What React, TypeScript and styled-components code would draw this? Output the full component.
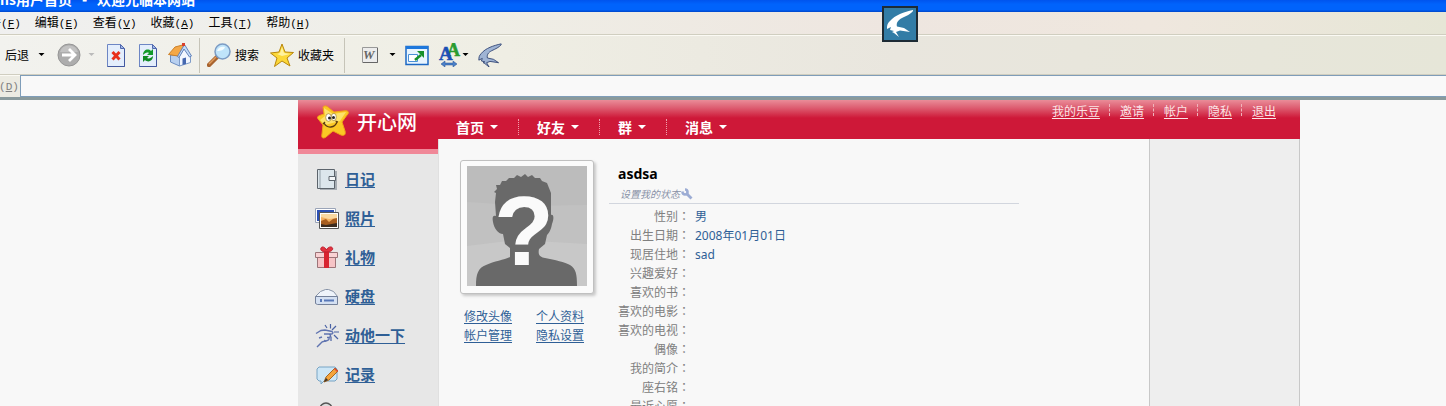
import React from "react";
import styled, { createGlobalStyle } from "styled-components";

const GlobalStyle = createGlobalStyle`
  * { box-sizing: border-box; }
  body {
    margin: 0;
    background: #f8f8f8;
    font-family: "Noto Sans", "Noto Sans CJK SC", sans-serif;
    font-size: 12px;
    line-height: 19px;
    color: #808080;
  }
  svg { display: block; flex: none; }
`;

/* ---------- Browser chrome ---------- */

const Screen = styled.div`
  height: 100vh;
  overflow: hidden;
  display: flex;
  flex-direction: column;
`;

const TitleBar = styled.div`
  flex: none;
  display: flex;
  align-items: flex-end;
  height: 12px;
  gap: 10px;
  overflow: hidden;
  padding-bottom: 6px;
  background: linear-gradient(#0054ee, #0063fc 35%, #0063fc 80%, #0046c8);
  color: #fff;
  font-family: "Noto Sans CJK SC", sans-serif;
  font-weight: 700;
  font-size: 14px;
  line-height: 14px;
  white-space: nowrap;
`;

const chromeTint = "linear-gradient(90deg, #f0f0f0, #efeee6 35%, #eee6e0 62%, #efe7de 80%, #e6e6d6)";

const MenuBar = styled.nav`
  flex: none;
  display: flex;
  align-items: center;
  gap: 14px;
  height: 23px;
  margin-left: -23px;
  border-bottom: 1px solid #d0cec0;
  background: ${chromeTint};
`;

const ChromeButton = styled.button<{ $labelled?: boolean }>`
  display: flex;
  align-items: center;
  gap: 4px;
  flex: none;
  margin: 0;
  padding: 0 ${(p) => (p.$labelled ? 3 : 0)}px 0 0;
  border: 0;
  background: none;
  color: #000;
  font-family: "Noto Sans CJK SC", sans-serif;
  font-size: 12px;
  line-height: 16px;
  white-space: nowrap;
`;

const Key = styled.span`
  font-family: "Liberation Mono", monospace;
  font-size: 11px;
`;

const ToolBar = styled.div`
  flex: none;
  display: flex;
  align-items: center;
  gap: 8px;
  height: 40px;
  padding-left: 5px;
  border-top: 1px solid #fbfaf4;
  border-bottom: 1px solid #d0cec0;
  background: linear-gradient(90deg, #f2f2ee, #efeee4 35%, #e9e6de 62%, #e6e6d8);
`;

const Split = styled.div<{ $gap: number; $lead?: number }>`
  display: flex;
  align-items: center;
  gap: ${(p) => p.$gap}px;
  padding-left: ${(p) => p.$lead ?? 0}px;
`;

const Divider = styled.span`
  width: 1px;
  height: 35px;
  margin: 0 -1px;
  background: #c6c4b8;
`;

const AddressBar = styled.div`
  flex: none;
  display: flex;
  align-items: center;
  height: 25px;
  margin-left: -25px;
  border-bottom: 3px solid #8a9a9c;
  background: #ecebe2;
  box-shadow: inset 0 1px #fbfaf4;
`;

const AddressLabel = styled.label`
  width: 45px;
  flex: none;
  font-family: "Noto Sans CJK SC", sans-serif;
  color: #808080;
`;

const AddressInput = styled.input`
  flex: 1;
  min-width: 0;
  height: 22px;
  padding: 0 4px;
  border: 1px solid #7f9db9;
  border-right: 0;
  background: #f9f9f9;
  font-family: inherit;
  font-size: 12px;
`;

const FloatingBird = styled.div`
  position: absolute;
  top: 6px;
  left: 882px;
  border: 2px solid #1d2b35;
  background: #327ca6;
`;

/* ---------- Site ---------- */

const Page = styled.div`
  flex: 1;
  min-height: 0;
  display: flex;
  padding: 0 146px 0 298px;
  overflow: hidden;
`;

const redBar = "linear-gradient(#ea8c98, #dd5c70 8px, #ce1838 18px)";

const Sidebar = styled.aside`
  flex: none;
  width: 140px;
  background: #e7e7e7;
`;

const Brand = styled.a`
  display: flex;
  align-items: center;
  gap: 6px;
  height: 54px;
  padding: 0 0 5px 19px;
  border-bottom: 5px solid #f08898;
  background: ${redBar};
  color: #fff;
  font-family: "Noto Sans CJK SC", sans-serif;
  font-size: 20px;
  font-weight: 500;
  line-height: 24px;
  text-decoration: none;
`;

const AppList = styled.ul`
  list-style: none;
  margin: 0;
  padding: 6px 0 0 17px;
`;

const AppItem = styled.li`
  display: flex;
  align-items: center;
  gap: 6px;
  height: 39px;
`;

const TextLink = styled.a<{ $large?: boolean }>`
  color: #2f5f96;
  font-family: "Noto Sans CJK SC", sans-serif;
  font-size: ${(p) => (p.$large ? 15 : 12)}px;
  font-weight: ${(p) => (p.$large ? 700 : 400)};
  padding-bottom: ${(p) => (p.$large ? 2 : 0)}px;
  text-decoration: underline;
  text-underline-offset: 2px;
  text-decoration-thickness: 1px;
`;

const Main = styled.div`
  flex: 1;
  min-width: 0;
  display: flex;
  flex-direction: column;
`;

const Header = styled.header`
  flex: none;
  display: flex;
  justify-content: space-between;
  align-items: flex-start;
  height: 39px;
  padding-right: 24px;
  background: ${redBar};
`;

const NavList = styled.ul`
  display: flex;
  list-style: none;
  margin: 0;
  padding: 19px 0 0;
`;

const NavItem = styled.li`
  display: flex;
  align-items: center;
  height: 16px;
  padding: 0 20px 0 18px;
  &:not(:last-child) { border-right: 1px dotted #f0a0ac; }
`;

const NavLink = styled.a`
  display: flex;
  align-items: center;
  gap: 6px;
  color: #fff;
  font-family: "Noto Sans CJK SC", sans-serif;
  font-size: 14px;
  font-weight: 700;
  line-height: 16px;
  text-decoration: none;
`;

const UserLinks = styled.ul`
  display: flex;
  list-style: none;
  margin: 0;
  padding: 4px 0 0;
`;

const UserItem = styled.li`
  display: flex;
  height: 12px;
  align-items: center;
  &:not(:last-child) {
    margin-right: 10px;
    padding-right: 9px;
    border-right: 1px dashed #f0b4bc;
  }
  a {
    color: #fbe4e6;
    font-family: "Noto Sans CJK SC", sans-serif;
    text-underline-offset: 2px;
  }
`;

const Columns = styled.div`
  flex: 1;
  min-height: 0;
  display: flex;
`;

const Profile = styled.main`
  flex: 1;
  min-width: 0;
  display: flex;
  align-items: flex-start;
  gap: 15px;
  padding: 21px 130px 0 21px;
  border-left: 1px solid #e0e0e0;
  background: #f8f8f8;
`;

const RightRail = styled.aside`
  flex: none;
  width: 151px;
  border: solid #c8c8c8;
  border-width: 0 1px;
  background: #eeeeee;
`;

const AvatarColumn = styled.div`
  flex: none;
  width: 134px;
`;

const AvatarFrame = styled.div`
  padding: 5px 6px 7px;
  border: 1px solid #c0c0c0;
  border-radius: 3px;
  background: #fbfbfb;
  box-shadow: 2px 2px 3px #c8c8c8;
`;

const AvatarLinks = styled.div`
  display: grid;
  grid-template-columns: 48px 48px;
  column-gap: 24px;
  padding: 12px 0 0 4px;
`;

const Details = styled.section`
  flex: 1;
  min-width: 0;
`;

const Heading = styled.div`
  padding: 0 9px;
  height: 44px;
  border-bottom: 1px solid #d2d6de;
`;

const Name = styled.h1`
  margin: 0;
  padding-top: 4px;
  color: #000;
  font-size: 14px;
  line-height: 20px;
`;

const Status = styled.a`
  display: flex;
  align-items: center;
  gap: 1px;
  height: 19px;
  padding-left: 2px;
  color: #8a93a8;
  font-family: "Noto Sans CJK SC", sans-serif;
  font-size: 10px;
  font-style: italic;
  text-decoration: none;
`;

const Facts = styled.table`
  margin-top: 3px;
  border-collapse: collapse;
  th, td { height: 19px; padding: 0; line-height: 19px; white-space: nowrap; }
  th { width: 81px; text-align: right; font-weight: 400; color: #808080; }
  td { padding-left: 5px; color: #2f5f96; }
`;

const Colon = styled.span`
  font-family: "Noto Sans CJK TC", sans-serif;
  line-height: 12px;
`;

/* ---------- Icons ---------- */

const Caret = ({ color = "#000", w = 9, h = 3 }: { color?: string; w?: number; h?: number }) => (
  <svg width={w} height={8} viewBox={`0 0 ${w} 8`} aria-hidden="true">
    <path d={`M${w / 2 - h} 2h${h * 2}l${-h} ${h}z`} fill={color} />
  </svg>
);

const BIRD =
  "M31 4C22 6 13 9 8 15C5 18 5 20 5 23L9 21L8 24L12 25L10 26L12 27L17 31L14 26L18 24.500L28 26L22 22L15 20.500C14 17 16 14 20 12C24 10 29 8 31 5Z";

const BirdIcon = ({ size, fill, stroke, box }: { size: number; fill: string; stroke?: string; box: string }) => (
  <svg width={size} height={size} viewBox={box} aria-hidden="true">
    <path d={BIRD} fill={fill} stroke={stroke} strokeLinejoin="round" />
  </svg>
);

const Icon = ({ children }: { children: React.ReactNode }) => (
  <svg width="24" height="24" viewBox="0 0 24 24" fill="none" aria-hidden="true">
    {children}
  </svg>
);

const ForwardIcon = () => (
  <Icon>
    <circle cx="12" cy="12" r="11" fill="#adadad" stroke="#969696" />
    <path d="M3 9a9.500 9.500 0 0 1 18 0z" fill="#c2c2c2" />
    <path d="M5 12h12M12 6l6 6-6 6" stroke="#fff" strokeWidth="2.800" />
  </Icon>
);

const Sheet = () => (
  <>
    <path d="M3.500 1.500h13l4 4v18h-17z" fill="#e4eefc" stroke="#6d86c4" />
    <path d="M16.500 1.500v4h4z" fill="#9fb6e6" stroke="#5269ae" />
    <path d="M20.500 6v17.500h-17" stroke="#4258a0" />
  </>
);

const StopIcon = () => (
  <Icon>
    <Sheet />
    <path d="M8.500 9l7 7.500M15.500 9l-7 7.500" stroke="#e8301c" strokeWidth="3" />
  </Icon>
);

const RefreshIcon = () => (
  <Icon>
    <Sheet />
    <path d="M7 12c0-5 5-7 8-4l2-2v6h-6l2-2c-2-1-4 0-6 2z" fill="#129a2a" />
    <path d="M17 13c0 5-5 7-8 4l-2 2v-6h6l-2 2c2 1 4 0 6-2z" fill="#0f8a24" />
  </Icon>
);

const HomeIcon = () => (
  <Icon>
    <path d="M2.500 12v7l9 4 1-10z" fill="#b8d0f0" stroke="#6b8cc0" />
    <path d="M11.500 13l5-8 6 8v6.500l-11 3.500z" fill="#f2f7ff" stroke="#7f9cc8" />
    <path d="M.500 11.500L7 4l9.500-2.500L10 13z" fill="#f4a848" stroke="#cc8028" />
    <path d="M16.500 1.500l7 11.500-2 1-5.500-8-5 8.500-1.500-1z" fill="#c4dcf8" stroke="#6484bc" />
    <path d="M14.500 15.500l3.500-1v6.500l-3.500 1z" fill="#4668b0" />
    <path d="M14 0h3v3h-3z" fill="#d8402c" />
  </Icon>
);

const SearchIcon = () => (
  <Icon>
    <path d="M2 22l8-8" stroke="#a86430" strokeWidth="4.500" strokeLinecap="round" />
    <path d="M2 21l7-7" stroke="#e09c5c" strokeWidth="1.500" />
    <circle cx="15.500" cy="8.500" r="7.500" fill="#bfe4fa" stroke="#7c9cc4" strokeWidth="1.500" />
    <path d="M10 8c1-4 5-5 8-4-1 3-4 4-8 4z" fill="#f4fcff" />
  </Icon>
);

const StarIcon = () => (
  <Icon>
    <path d="M12 1l3 8 8.500.500-6.500 5.500 3 8-8-5-7.500 5.500L7 15 .500 10 9 9z" fill="#fcd838" stroke="#b8860c" strokeLinejoin="round" />
    <path d="M12 4l2 6 6 1-8 2-5-2 3-1z" fill="#fff2a0" />
  </Icon>
);

const WordIcon = () => (
  <Icon>
    <path d="M4.500 4.500h15v15h-15z" fill="#ececec" stroke="#999" />
    <path d="M19.500 5v14.500H5" stroke="#666" />
    <text x="5" y="16" fill="#666" fontFamily="Liberation Serif, serif" fontWeight="700" fontStyle="italic" fontSize="13">W</text>
  </Icon>
);

const WindowIcon = () => (
  <Icon>
    <path d="M1 3.500h22v18H1z" fill="#e8f4fe" stroke="#1c68c4" strokeWidth="1.500" />
    <path d="M1 3h22v3H1z" fill="#1e78dc" />
    <path d="M3.500 11.500h9v7h-9z" fill="#fff" stroke="#4a90d8" />
    <path d="M10 17l6-5" stroke="#16902a" strokeWidth="2.500" />
    <path d="M12 8h7v7z" fill="#16902a" />
  </Icon>
);

const FontSizeIcon = () => (
  <Icon>
    <text x="10" y="13" fill="#2a9c30" stroke="#2a9c30" strokeWidth=".5" fontFamily="Liberation Serif, serif" fontWeight="700" fontSize="18">A</text>
    <text x="2" y="17" fill="#1c50b4" stroke="#1c50b4" strokeWidth=".5" fontFamily="Liberation Serif, serif" fontWeight="700" fontSize="19">A</text>
    <path d="M4 21l4-3v2h8v-2l4 3-4 3v-2H8v2z" fill="#4a80c8" stroke="#234f94" strokeWidth=".5" />
  </Icon>
);

const LogoStar = () => (
  <svg width="34" height="34" viewBox="0 0 34 34" fill="none" aria-hidden="true">
    <path d="M6 2c2-2 4-1 6 1l5 4 9-1c5-1 7 1 4 4l-5 7 3 9c1 4-1 5-4 4l-8-4-7 6c-3 2-5 1-4-3l1-9-4-5c-3-3-1-4 2-5l3-1z" fill="#fbc824" stroke="#f0a418" />
    <path d="M7 3l9 6 13-2-6 9-15 4-5-5 5-4z" fill="#fde26a" />
    <ellipse cx="11.500" cy="12.500" rx="2.800" ry="3.800" fill="#fff" stroke="#8a6a20" strokeWidth=".6" />
    <ellipse cx="16.800" cy="12" rx="2.500" ry="3.600" fill="#fff" stroke="#8a6a20" strokeWidth=".6" />
    <circle cx="12.500" cy="13" r="1.500" fill="#222" />
    <circle cx="16.500" cy="12.500" r="1.500" fill="#222" />
    <path d="M7 18c3 6 11 5 13-1M6 19l2-2M18.500 16l2.500 1" stroke="#5a3a10" strokeWidth="1.300" />
  </svg>
);

const DiaryIcon = () => (
  <Icon>
    <path d="M5 3h17v19H5z" fill="#a8aeb4" />
    <path d="M2.500 1.500h17v19h-17z" fill="#dce6ec" stroke="#5c646c" />
    <path d="M5 2v18" stroke="#94a0a8" />
    <path d="M14 8.500h6.500v4H14z" fill="#f4f6f8" stroke="#5c646c" />
  </Icon>
);

const PhotoIcon = () => (
  <Icon>
    <path d="M.500 1.500h20v14H.500z" fill="#fff" stroke="#9aa4b8" />
    <path d="M2 3h17v11H2z" fill="#2c50b4" />
    <path d="M4.500 5.500h19v16h-19z" fill="#fff" stroke="#555" />
    <path d="M6 7h16v13H6z" fill="#f4b060" />
    <path d="M6 7h16v4l-8 1-8-2z" fill="#fad8a0" />
    <path d="M6 14l5-2 3 3 4-3 4-1v9H6z" fill="#a85e20" />
    <path d="M6 17l5 1 11-2v4H6z" fill="#3c2c20" />
  </Icon>
);

const GiftIcon = () => (
  <Icon>
    <path d="M2.500 11.500h18v10h-18z" fill="#f6c4c6" stroke="#9c7478" />
    <path d="M.500 6.500h22v5H.500z" fill="#f9d2d4" stroke="#9c7478" />
    <path d="M9 6h5v16H9z" fill="#d82430" />
    <path d="M11.500 6C7 6 5 4 6 2s4-1 5.500 2c1-3 5-4 6-2s-2 4-6 4z" fill="#e03440" stroke="#c01c2c" />
  </Icon>
);

const DiskIcon = () => (
  <Icon>
    <path d="M.500 11.500l5-5 5-2h3l5 2 4 5z" fill="#eef3fa" stroke="#8894a8" />
    <path d="M.500 11.500h22v8H2.500l-2-1z" fill="#d4e0f2" stroke="#74819a" />
    <path d="M5 14h2v3H5zM9 14.500h10v2H9z" fill="#5878b8" />
  </Icon>
);

const PokeIcon = () => (
  <Icon>
    <path d="M1 9.500l5-3 4-.500 7 1.500c1.500 1 1 2.500-.500 2.500H9M14 10c2 .500 2 3 0 3.500.500 2-.500 3-3 3.500-2 .500-4 0-5 2l-4 4M12 13.500h2M9 16.500l2 .500M4 14l3-1" stroke="#6074b0" strokeWidth="1.400" />
    <path d="M15.500 0v4.500M21 2l-4 4M24 8h-5M19 11l4 4M16 12.500V17M10 1l2 3" stroke="#4a62a4" strokeWidth="1.200" />
  </Icon>
);

const NoteIcon = () => (
  <Icon>
    <path d="M4 4h16l2 2v10l-2 2H9l-3 3v-3H4l-2-2V6z" fill="#cde6f6" stroke="#78a4c4" />
    <path d="M9 19l2-5 9-9 3 3-9 9z" fill="#f4a43c" stroke="#a86820" />
    <path d="M9 19l2-4 2 2z" fill="#333" />
    <path d="M19 6l1-1 3 3-1 1z" fill="#e04838" />
  </Icon>
);

const PersonIcon = () => (
  <Icon>
    <circle cx="11" cy="7" r="6" fill="#ddd" stroke="#555" strokeWidth="1.500" />
  </Icon>
);

const WrenchIcon = () => (
  <svg width="12" height="12" viewBox="0 0 12 12" fill="none" aria-hidden="true">
    <circle cx="4" cy="4" r="2.500" stroke="#9cacd4" strokeWidth="2.600" />
    <path d="M0 0h4v3.500H0z" fill="#f8f8f8" />
    <path d="M6 6l4.500 4.500" stroke="#9cacd4" strokeWidth="2.800" />
  </svg>
);

const Avatar = () => (
  <svg width="120" height="120" viewBox="0 0 120 120" role="img" aria-label="头像">
    <path d="M0 0h120v120H0z" fill="#bcbcbc" />
    <path d="M0 36l60 4 60-1v81H0z" fill="#c1c1c1" />
    <path d="M0 80l50-6 70 4v42H0z" fill="#c8c8c8" />
    <path
      d="M9 120C9 108 11 102 19 99C27 95 37 94 43 91V82L38 78L36 68C31 68 27 62 26 56C25 51 26 49 29 50L28 36L29 27L27 26L30 23L29 19L33 19L35 15L39 15L42 12L47 12L50 9L54 11L58 8L61 11L65 9L68 12L73 12L75 15L80 17L82 22L84 27V49C87 48 87 53 85 58C84 64 82 67 80 69L78 78L72 83C71 88 72 91 78 92C88 94 98 96 103 99C109 103 110 108 110 120Z"
      fill="#696969"
    />
    <text x="57" y="99" textAnchor="middle" fill="#fafafa" fontFamily="Liberation Sans, sans-serif" fontWeight="700" fontSize="98">?</text>
  </svg>
);

/* ---------- Data ---------- */

const menus = [["文件", "F"], ["编辑", "E"], ["查看", "V"], ["收藏", "A"], ["工具", "T"], ["帮助", "H"]];

const apps: [string, () => React.ReactElement][] = [
  ["日记", DiaryIcon],
  ["照片", PhotoIcon],
  ["礼物", GiftIcon],
  ["硬盘", DiskIcon],
  ["动他一下", PokeIcon],
  ["记录", NoteIcon],
  ["好友", PersonIcon],
];

const facts = [
  ["性别", "男"],
  ["出生日期", "2008年01月01日"],
  ["现居住地", "sad"],
  ["兴趣爱好", ""],
  ["喜欢的书", ""],
  ["喜欢的电影", ""],
  ["喜欢的电视", ""],
  ["偶像", ""],
  ["我的简介", ""],
  ["座右铭", ""],
  ["最近心愿", ""],
];

export default function App() {
  return (
    <Screen>
      <GlobalStyle />
      <TitleBar>
        <span>ns用户首页</span>
        <span>-</span>
        <span>欢迎光临本网站</span>
      </TitleBar>
      <MenuBar>
        {menus.map(([label, key]) => (
          <ChromeButton key={key}>
            <span>
              {label}
              <Key>(<u>{key}</u>)</Key>
            </span>
          </ChromeButton>
        ))}
      </MenuBar>
      <ToolBar>
        <Split $gap={8}>
          <ChromeButton>后退</ChromeButton>
          <ChromeButton aria-label="后退历史"><Caret /></ChromeButton>
        </Split>
        <Split $gap={6} $lead={3}>
          <ChromeButton aria-label="前进"><ForwardIcon /></ChromeButton>
          <ChromeButton aria-label="前进历史"><Caret color="#bbb" /></ChromeButton>
        </Split>
        <ChromeButton aria-label="停止"><StopIcon /></ChromeButton>
        <ChromeButton aria-label="刷新"><RefreshIcon /></ChromeButton>
        <ChromeButton aria-label="主页"><HomeIcon /></ChromeButton>
        <Divider />
        <ChromeButton $labelled><SearchIcon />搜索</ChromeButton>
        <ChromeButton $labelled><StarIcon />收藏夹</ChromeButton>
        <Divider />
        <Split $gap={6} $lead={6}>
          <ChromeButton aria-label="编辑"><WordIcon /></ChromeButton>
          <ChromeButton aria-label="编辑选项"><Caret /></ChromeButton>
        </Split>
        <ChromeButton aria-label="窗口"><WindowIcon /></ChromeButton>
        <Split $gap={0}>
          <ChromeButton aria-label="文字大小"><FontSizeIcon /></ChromeButton>
          <ChromeButton aria-label="文字大小选项"><Caret /></ChromeButton>
        </Split>
        <ChromeButton aria-label="飞燕">
          <BirdIcon size={24} fill="#9fb4d4" stroke="#2c4070" box="4 3 28 28" />
        </ChromeButton>
      </ToolBar>
      <AddressBar>
        <AddressLabel htmlFor="address">
          地址<Key>(<u>D</u>)</Key>
        </AddressLabel>
        <AddressInput id="address" type="text" />
      </AddressBar>
      <FloatingBird>
        <BirdIcon size={32} fill="#fff" box="2 2 32 32" />
      </FloatingBird>

      <Page>
        <Sidebar>
          <Brand href="#"><LogoStar />开心网</Brand>
          <AppList>
            {apps.map(([label, AppIcon]) => (
              <AppItem key={label}>
                <AppIcon />
                <TextLink href="#" $large>{label}</TextLink>
              </AppItem>
            ))}
          </AppList>
        </Sidebar>
        <Main>
          <Header>
            <NavList>
              {["首页", "好友", "群", "消息"].map((label) => (
                <NavItem key={label}>
                  <NavLink href="#">
                    {label}
                    <Caret color="#fff" w={8} h={4} />
                  </NavLink>
                </NavItem>
              ))}
            </NavList>
            <UserLinks>
              {["我的乐豆", "邀请", "帐户", "隐私", "退出"].map((label) => (
                <UserItem key={label}><a href="#">{label}</a></UserItem>
              ))}
            </UserLinks>
          </Header>
          <Columns>
            <Profile>
              <AvatarColumn>
                <AvatarFrame><Avatar /></AvatarFrame>
                <AvatarLinks>
                  {["修改头像", "个人资料", "帐户管理", "隐私设置"].map((label) => (
                    <TextLink key={label} href="#">{label}</TextLink>
                  ))}
                </AvatarLinks>
              </AvatarColumn>
              <Details>
                <Heading>
                  <Name>asdsa</Name>
                  <Status href="#">设置我的状态<WrenchIcon /></Status>
                </Heading>
                <Facts>
                  <tbody>
                    {facts.map(([label, value]) => (
                      <tr key={label}>
                        <th scope="row">{label}<Colon>：</Colon></th>
                        <td>{value}</td>
                      </tr>
                    ))}
                  </tbody>
                </Facts>
              </Details>
            </Profile>
            <RightRail />
          </Columns>
        </Main>
      </Page>
    </Screen>
  );
}
